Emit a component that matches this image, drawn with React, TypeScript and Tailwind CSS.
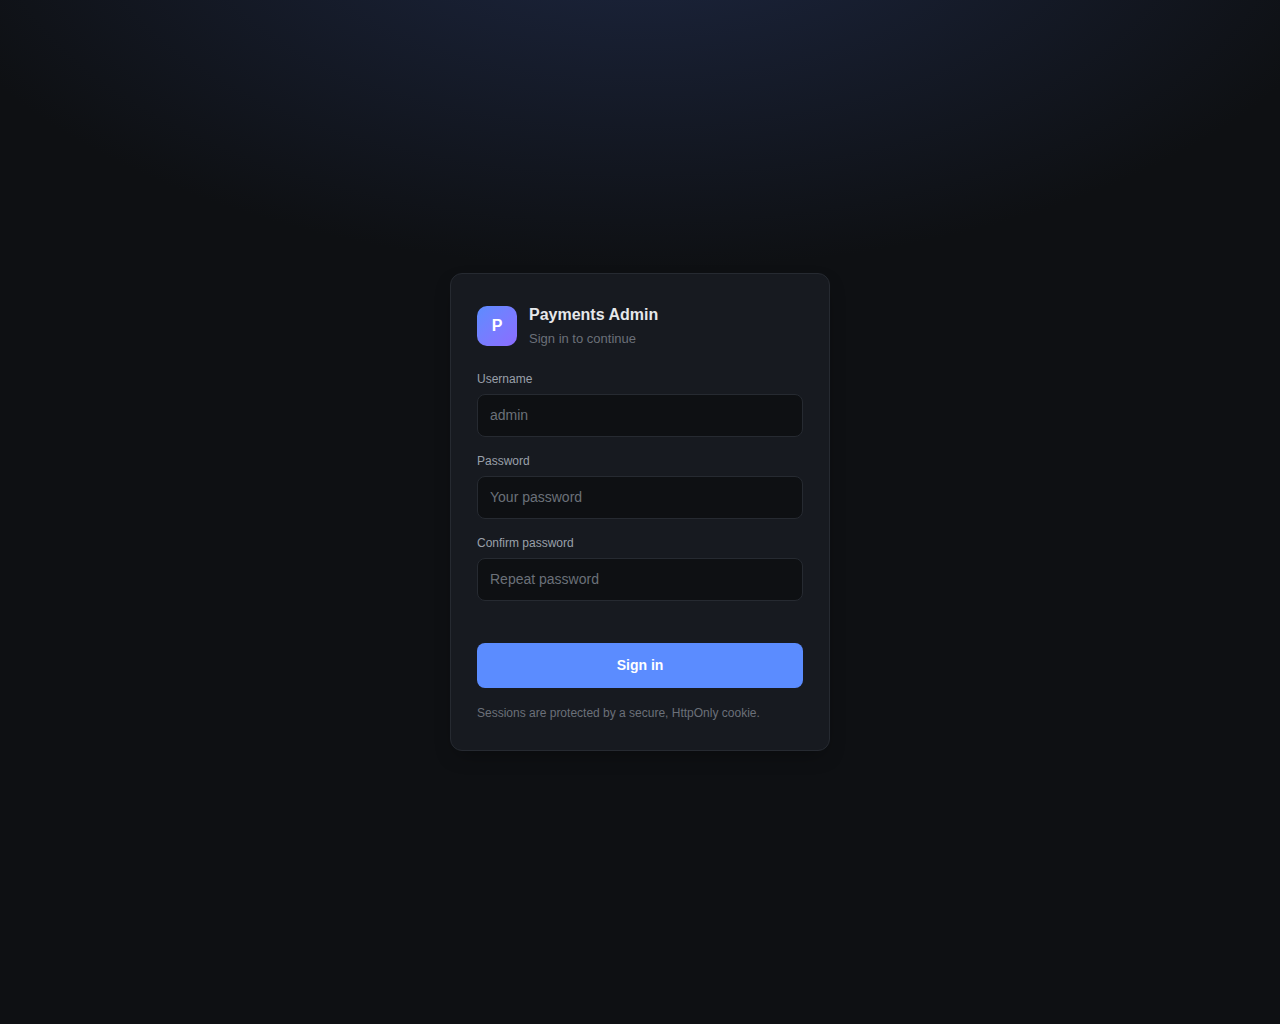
import React from 'react';

const fields = [
  { id: 'username', label: 'Username', type: 'text', placeholder: 'admin' },
  { id: 'password', label: 'Password', type: 'password', placeholder: 'Your password' },
  { id: 'confirm', label: 'Confirm password', type: 'password', placeholder: 'Repeat password' },
];

export default function App() {
  return (
    <main className="grid min-h-screen place-items-center bg-[#0e1013] bg-[radial-gradient(1200px_600px_at_50%_-10%,#1d2742_0%,#0e1013_62%)] p-6 font-['Liberation_Sans',Arial,sans-serif] text-[#e6e8eb]">
      <div className="w-full max-w-[380px] rounded-xl border border-[#262a31] bg-[#171a20] px-[26px] py-7 shadow-[0_8px_20px_-6px_rgba(0,0,0,0.35)]">
        {/* Brand */}
        <div className="mb-5 flex items-center gap-3">
          <div className="grid size-10 place-items-center rounded-[10px] bg-linear-135 from-[#5b8cff] to-[#8b6cff] font-bold text-white">
            P
          </div>
          <div>
            <h1 className="text-base leading-[26px] font-bold">Payments Admin</h1>
            <p className="text-[13px] leading-[21px] text-[#6b7079]">Sign in to continue</p>
          </div>
        </div>

        <form onSubmit={(e) => e.preventDefault()}>
          {fields.map((field) => (
            <div key={field.id} className="mb-3.5">
              <label htmlFor={field.id} className="mb-1 block text-[12px] leading-[21px] text-[#9aa0aa]">
                {field.label}
              </label>
              <input
                id={field.id}
                type={field.type}
                placeholder={field.placeholder}
                className="block w-full rounded-lg border border-[#262a31] bg-[#0e1013] px-3 py-2.5 text-[14px] leading-[21px] outline-none placeholder:text-[#6b7079] focus:border-[#5b8cff]"
              />
            </div>
          ))}

          <button type="submit" className="mt-7 w-full cursor-pointer rounded-lg bg-[#5b8cff] py-3 text-[14px] leading-[21px] font-bold text-white">
            Sign in
          </button>
        </form>

        <p className="mt-4 text-[12px] leading-[18px] text-[#6b7079]">
          Sessions are protected by a secure, HttpOnly cookie.
        </p>
      </div>
    </main>
  );
}
